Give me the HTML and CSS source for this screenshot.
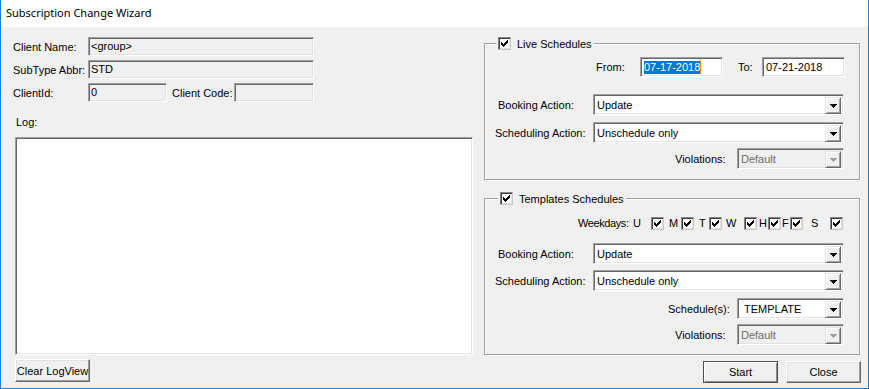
FILE: index.html
```html
<!DOCTYPE html>
<html lang="en">
<head>
    <meta charset="UTF-8">
    <title>Subscription Change Wizard</title>
    <link rel="stylesheet" href="styles.css">
</head>
<body>
    <div class="window">
        <div class="titlebar">Subscription Change Wizard</div>

        <div class="content">
            <!-- left side: client info and log -->
            <div class="left">
                <div class="info-row">
                    <span class="info-label">Client Name:</span>
                    <span class="field wide">&lt;group&gt;</span>
                </div>
                <div class="info-row">
                    <span class="info-label">SubType Abbr:</span>
                    <span class="field wide">STD</span>
                </div>
                <div class="info-row">
                    <span class="info-label">ClientId:</span>
                    <span class="field short">0</span>
                    <span class="code-label">Client Code:</span>
                    <span class="field code"></span>
                </div>

                <div class="log-label">Log:</div>
                <div class="log-box"></div>

                <button class="btn clear-btn">Clear LogView</button>
            </div>

            <!-- right side: schedule groups -->
            <div class="right">
                <div class="group live">
                    <div class="legend">
                        <span class="checkbox"><svg width="13" height="13"><path d="M9 3h1v1h-1z M8 4h2v1h-2z M3 5h1v1h-1z M7 5h3v1h-3z M3 6h2v1h-2z M6 6h3v1h-3z M3 7h5v1h-5z M4 8h3v1h-3z M5 9h1v1h-1z"/></svg></span>
                        <span>Live Schedules</span>
                    </div>

                    <div class="date-row">
                        <span class="from-label">From:</span>
                        <span class="edit"><span class="selected">07-17-2018</span><span class="caret"></span></span>
                        <span class="to-label">To:</span>
                        <span class="edit">07-21-2018</span>
                    </div>

                    <div class="combo-row booking">
                        <span class="row-label">Booking Action:</span>
                        <span class="combo long"><span class="combo-text">Update</span><span class="combo-btn"><svg width="7" height="4"><path d="M0 0h7v1h-1v1h-1v1h-1v1h-1v-1h-1v-1h-1v-1h-1z"/></svg></span></span>
                    </div>
                    <div class="combo-row sched">
                        <span class="row-label shift">Scheduling Action:</span>
                        <span class="combo long"><span class="combo-text">Unschedule only</span><span class="combo-btn"><svg width="7" height="4"><path d="M0 0h7v1h-1v1h-1v1h-1v1h-1v-1h-1v-1h-1v-1h-1z"/></svg></span></span>
                    </div>
                    <div class="combo-row end viol">
                        <span class="small-label">Violations:</span>
                        <span class="combo short disabled"><span class="combo-text">Default</span><span class="combo-btn"><svg width="7" height="4"><path d="M0 0h7v1h-1v1h-1v1h-1v1h-1v-1h-1v-1h-1v-1h-1z"/></svg></span></span>
                    </div>
                </div>

                <div class="group templates">
                    <div class="legend">
                        <span class="checkbox"><svg width="13" height="13"><path d="M9 3h1v1h-1z M8 4h2v1h-2z M3 5h1v1h-1z M7 5h3v1h-3z M3 6h2v1h-2z M6 6h3v1h-3z M3 7h5v1h-5z M4 8h3v1h-3z M5 9h1v1h-1z"/></svg></span>
                        <span>Templates Schedules</span>
                    </div>

                    <div class="weekdays">
                        <span class="wd-title">Weekdays:</span>
                        <span>U</span>
                        <span class="checkbox"><svg width="13" height="13"><path d="M9 3h1v1h-1z M8 4h2v1h-2z M3 5h1v1h-1z M7 5h3v1h-3z M3 6h2v1h-2z M6 6h3v1h-3z M3 7h5v1h-5z M4 8h3v1h-3z M5 9h1v1h-1z"/></svg></span>
                        <span class="pad5">M</span>
                        <span class="checkbox"><svg width="13" height="13"><path d="M9 3h1v1h-1z M8 4h2v1h-2z M3 5h1v1h-1z M7 5h3v1h-3z M3 6h2v1h-2z M6 6h3v1h-3z M3 7h5v1h-5z M4 8h3v1h-3z M5 9h1v1h-1z"/></svg></span>
                        <span class="pad5">T</span>
                        <span class="checkbox"><svg width="13" height="13"><path d="M9 3h1v1h-1z M8 4h2v1h-2z M3 5h1v1h-1z M7 5h3v1h-3z M3 6h2v1h-2z M6 6h3v1h-3z M3 7h5v1h-5z M4 8h3v1h-3z M5 9h1v1h-1z"/></svg></span>
                        <span class="pad4">W</span>
                        <span class="checkbox"><svg width="13" height="13"><path d="M9 3h1v1h-1z M8 4h2v1h-2z M3 5h1v1h-1z M7 5h3v1h-3z M3 6h2v1h-2z M6 6h3v1h-3z M3 7h5v1h-5z M4 8h3v1h-3z M5 9h1v1h-1z"/></svg></span>
                        <span class="pad3">H</span>
                        <span class="checkbox"><svg width="13" height="13"><path d="M9 3h1v1h-1z M8 4h2v1h-2z M3 5h1v1h-1z M7 5h3v1h-3z M3 6h2v1h-2z M6 6h3v1h-3z M3 7h5v1h-5z M4 8h3v1h-3z M5 9h1v1h-1z"/></svg></span>
                        <span class="pad1">F</span>
                        <span class="checkbox"><svg width="13" height="13"><path d="M9 3h1v1h-1z M8 4h2v1h-2z M3 5h1v1h-1z M7 5h3v1h-3z M3 6h2v1h-2z M6 6h3v1h-3z M3 7h5v1h-5z M4 8h3v1h-3z M5 9h1v1h-1z"/></svg></span>
                        <span class="pad8">S</span>
                        <span class="checkbox"><svg width="13" height="13"><path d="M9 3h1v1h-1z M8 4h2v1h-2z M3 5h1v1h-1z M7 5h3v1h-3z M3 6h2v1h-2z M6 6h3v1h-3z M3 7h5v1h-5z M4 8h3v1h-3z M5 9h1v1h-1z"/></svg></span>
                    </div>

                    <div class="combo-row t-booking">
                        <span class="row-label">Booking Action:</span>
                        <span class="combo long"><span class="combo-text">Update</span><span class="combo-btn"><svg width="7" height="4"><path d="M0 0h7v1h-1v1h-1v1h-1v1h-1v-1h-1v-1h-1v-1h-1z"/></svg></span></span>
                    </div>
                    <div class="combo-row t-sched">
                        <span class="row-label shift">Scheduling Action:</span>
                        <span class="combo long"><span class="combo-text">Unschedule only</span><span class="combo-btn"><svg width="7" height="4"><path d="M0 0h7v1h-1v1h-1v1h-1v1h-1v-1h-1v-1h-1v-1h-1z"/></svg></span></span>
                    </div>
                    <div class="combo-row end t-schedules">
                        <span class="small-label wider">Schedule(s):</span>
                        <span class="combo short"><span class="combo-text roomy">TEMPLATE</span><span class="combo-btn"><svg width="7" height="4"><path d="M0 0h7v1h-1v1h-1v1h-1v1h-1v-1h-1v-1h-1v-1h-1z"/></svg></span></span>
                    </div>
                    <div class="combo-row end t-viol">
                        <span class="small-label">Violations:</span>
                        <span class="combo short disabled"><span class="combo-text">Default</span><span class="combo-btn"><svg width="7" height="4"><path d="M0 0h7v1h-1v1h-1v1h-1v1h-1v-1h-1v-1h-1v-1h-1z"/></svg></span></span>
                    </div>
                </div>

                <div class="actions">
                    <button class="btn default">Start</button>
                    <button class="btn">Close</button>
                </div>
            </div>
        </div>
    </div>
</body>
</html>
```

FILE: styles.css
```css
* {
    margin: 0;
    padding: 0;
    box-sizing: border-box;
}

body {
    font-family: "Liberation Sans", Arial, sans-serif;
    font-size: 11px;
    color: #000;
    background: #fff;
}

.window {
    width: 869px;
    height: 389px;
    border: 1px solid #1883d7;
    border-top: none;
    background: #f0f0f0;
    display: flex;
    flex-direction: column;
}

.titlebar {
    height: 27px;
    flex-shrink: 0;
    background: #fff;
    font-family: "Noto Sans", sans-serif;
    font-size: 11px;
    line-height: 26px;
    padding-left: 5px;
}

.content {
    flex: 1;
    display: flex;
    padding-left: 12px;
}

/* sunken 3d edge used by fields, edits and combos */
.field,
.edit,
.combo,
.log-box {
    border: 1px solid;
    border-color: #a0a0a0 #fff #fff #a0a0a0;
    box-shadow: inset 1px 1px #696969, inset -1px -1px #e3e3e3;
}

.left {
    width: 460px;
    padding-top: 10px;
    display: flex;
    flex-direction: column;
}

.info-row {
    display: flex;
    align-items: center;
    height: 19px;
}

.info-row + .info-row {
    margin-top: 4px;
}

.info-label {
    width: 75px;
}

.field {
    height: 19px;
    background: #f0f0f0;
    padding-left: 2px;
    line-height: 17px;
}

.field.wide {
    width: 226px;
}

.field.short {
    width: 79px;
}

.code-label {
    width: 67px;
    padding-left: 5px;
}

.field.code {
    width: 80px;
}

.log-label {
    margin-top: 12px;
    line-height: 16px;
    padding-left: 3px;
}

.log-box {
    margin: 7px 0 0 2px;
    width: 458px;
    height: 218px;
    background: #fff;
}

.btn {
    width: 75px;
    height: 22px;
    font-family: "Liberation Sans", Arial, sans-serif;
    font-size: 11px;
    color: #000;
    background: #f0f0f0;
    border: 1px solid;
    border-color: #fff #696969 #696969 #fff;
    box-shadow: inset -1px -1px #a0a0a0, inset 1px 1px #e3e3e3;
}

.btn.default {
    border-color: #505050;
    box-shadow: inset 1px 1px #fff, inset -1px -1px #8a8a8a;
}

.clear-btn {
    margin: 4px 0 0 2px;
    height: 23px;
}

.right {
    width: 376px;
    margin-left: 11px;
    padding-top: 16px;
    display: flex;
    flex-direction: column;
}

.group {
    position: relative;
    border: 1px solid #a0a0a0;
    box-shadow: inset 1px 1px #fff, 1px 1px #fff;
    padding: 0 14px 0 13px;
}

.group.live {
    height: 137px;
    padding-top: 13px;
}

.group.templates {
    height: 157px;
    margin-top: 18px;
    padding-top: 18px;
}

.legend {
    position: absolute;
    top: -7px;
    left: 11px;
    display: flex;
    align-items: center;
    gap: 6px;
    padding: 0 2px;
    height: 13px;
    background: #f0f0f0;
}

.templates .legend {
    left: 13px;
}

.checkbox {
    display: block;
    width: 13px;
    height: 13px;
    background: #fff;
    border: 1px solid;
    border-color: #848484 #c8c8c8 #c8c8c8 #848484;
    box-shadow: inset 1px 1px #404040, inset -1px -1px #e3e3e3;
}

.checkbox svg {
    display: block;
    margin: -1px;
}

.date-row {
    display: flex;
    justify-content: flex-end;
    align-items: center;
    height: 20px;
}

.from-label {
    width: 44px;
}

.to-label {
    width: 39px;
    padding-left: 15px;
}

.edit {
    width: 83px;
    height: 20px;
    background: #fff;
    padding-left: 3px;
    line-height: 18px;
    display: flex;
    align-items: center;
}

.selected {
    background: #0078d7;
    color: #fff;
    line-height: 13px;
}

.caret {
    width: 1px;
    height: 14px;
    background: #ff8c00;
}

.combo-row {
    display: flex;
    justify-content: space-between;
    align-items: center;
    padding-right: 1px;
}

.combo-row.end {
    justify-content: flex-end;
}

.row-label.shift {
    margin-left: -3px;
}

.small-label {
    width: 62px;
}

.small-label.wider {
    width: 69px;
}

.booking { margin-top: 17px; }
.sched { margin-top: 7px; }
.viol { margin-top: 5px; }
.t-booking { margin-top: 13px; }
.t-sched { margin-top: 6px; }
.t-schedules { margin-top: 7px; }
.t-viol { margin-top: 5px; }

.combo {
    height: 21px;
    background: #fff;
    display: flex;
    padding: 2px;
}

.combo.long {
    width: 251px;
}

.combo.short {
    width: 107px;
}

.combo-text {
    flex: 1;
    line-height: 17px;
    padding-left: 1px;
}

.combo-text.roomy {
    padding-left: 4px;
}

.combo-btn {
    width: 16px;
    height: 17px;
    background: #f0f0f0;
    border: 1px solid;
    border-color: #e3e3e3 #696969 #696969 #e3e3e3;
    box-shadow: inset 1px 1px #fff, inset -1px -1px #a0a0a0;
    display: flex;
    align-items: center;
    justify-content: center;
}

.combo-btn svg {
    display: block;
}

.combo.disabled {
    background: #f0f0f0;
    color: #6d6d6d;
}

.combo.disabled .combo-btn svg {
    fill: #a0a0a0;
}

.weekdays {
    display: grid;
    grid-template-columns: 55px 18px 13px 17px 13px 15px 13px 22px 13px 11px 13px 9px 13px 27px 13px;
    justify-content: end;
    align-items: center;
    height: 13px;
    line-height: 13px;
    margin-right: 2px;
}

.wd-title {
    letter-spacing: -0.4px;
    white-space: nowrap;
}

.pad1 { padding-left: 1px; }
.pad3 { padding-left: 2px; }
.pad4 { padding-left: 4px; }
.pad5 { padding-left: 5px; }
.pad8 { padding-left: 8px; }

.actions {
    display: flex;
    justify-content: flex-end;
    gap: 8px;
    margin: 6px -1px 0 0;
}
```
